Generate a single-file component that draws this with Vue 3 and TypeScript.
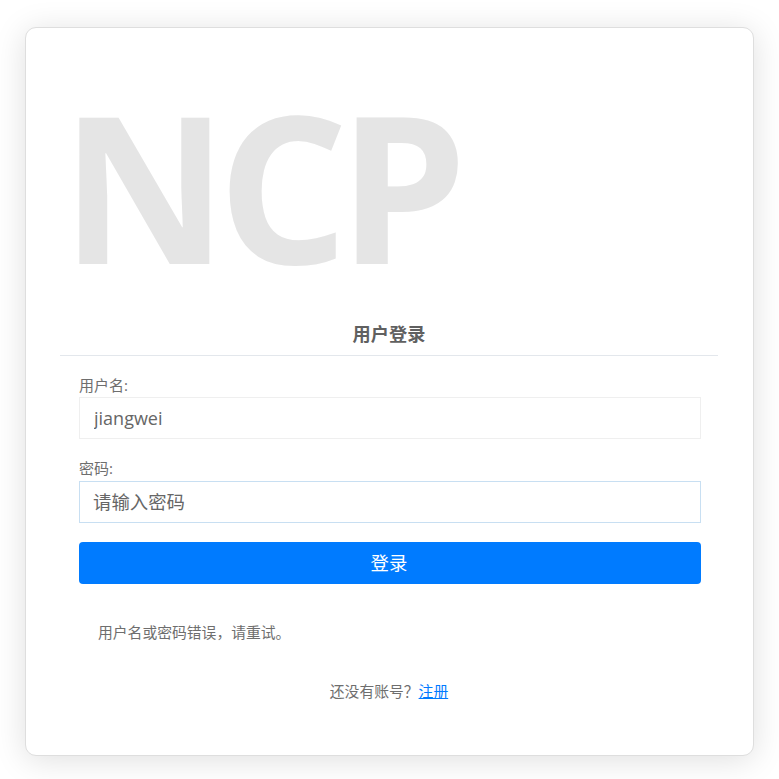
<script setup lang="ts">
const username = 'jiangwei'
</script>

<template>
  <div class="page">
    <div class="card">
      <div class="logo">NCP</div>
      <h2 class="title">用户登录</h2>
      <form class="form" @submit.prevent>
        <label class="label" for="u">用户名:</label>
        <input id="u" class="input" type="text" :value="username" />
        <label class="label second" for="p">密码:</label>
        <input id="p" class="input focused" type="password" placeholder="请输入密码" />
        <button class="btn" type="button">登录</button>
      </form>
      <p class="error">用户名或密码错误，请重试。</p>
      <p class="foot">还没有账号？<a href="#" class="link">注册</a></p>
    </div>
  </div>
</template>

<style>
html, body { margin: 0; background: #fff; }
</style>

<style scoped>
.page {
  width: 779px;
  height: 779px;
  box-sizing: border-box;
  padding: 27px 25px 23px 25px;
  overflow: hidden;
  background: #fff;
  font-family: "Open Sans", "Noto Sans CJK SC", sans-serif;
  color: #666;
}
.card {
  box-sizing: border-box;
  height: 729px;
  background: #fff;
  border: 1px solid #dedede;
  border-radius: 11px;
  box-shadow: 0 4px 32px rgba(0, 0, 0, 0.13);
  padding: 0 35px 0 34px;
  display: flex;
  flex-direction: column;
}
.logo {
  font-size: 205px;
  font-weight: 700;
  line-height: 250px;
  color: #e5e5e5;
  margin: 32px 0 0 1px;
  letter-spacing: -10px;
  height: 262px;
}
.title {
  margin: 0;
  height: 33px;
  line-height: 24px;
  font-size: 18.2px;
  font-weight: 700;
  text-align: center;
  color: #606060;
  border-bottom: 1px solid #e3e7ec;
}
.form {
  display: flex;
  flex-direction: column;
  padding: 18px 17px 0 19px;
}
.label {
  font-size: 15px;
  line-height: 23px;
  color: #6e6e6e;
}
.second { margin: 18px 0 1px; }
.input {
  box-sizing: border-box;
  width: 100%;
  height: 42px;
  padding: 0 14px;
  font: 18px "Open Sans", "Noto Sans CJK SC", sans-serif;
  color: #666;
  background: #fff;
  border: 1px solid #efefef;
  outline: none;
}
.input::placeholder { color: #666; opacity: 1; font-size: 18.4px; }
.focused { border-color: #c8dff2; padding-left: 13px; }
.btn {
  height: 42px;
  margin-top: 19px;
  padding: 0 2px 2px 0;
  border: none;
  border-radius: 4px;
  background: #007bff;
  color: #fff;
  font: 18.4px "Open Sans", "Noto Sans CJK SC", sans-serif;
}
.error {
  margin: 38px 0 0 38px;
  font-size: 14.8px;
  line-height: 20px;
  color: #6e6e6e;
}
.foot {
  margin: 39px 0 0;
  text-align: center;
  font-size: 14.8px;
  line-height: 20px;
  color: #6e6e6e;
}
.link { color: #007bff; text-decoration: underline; }
</style>
